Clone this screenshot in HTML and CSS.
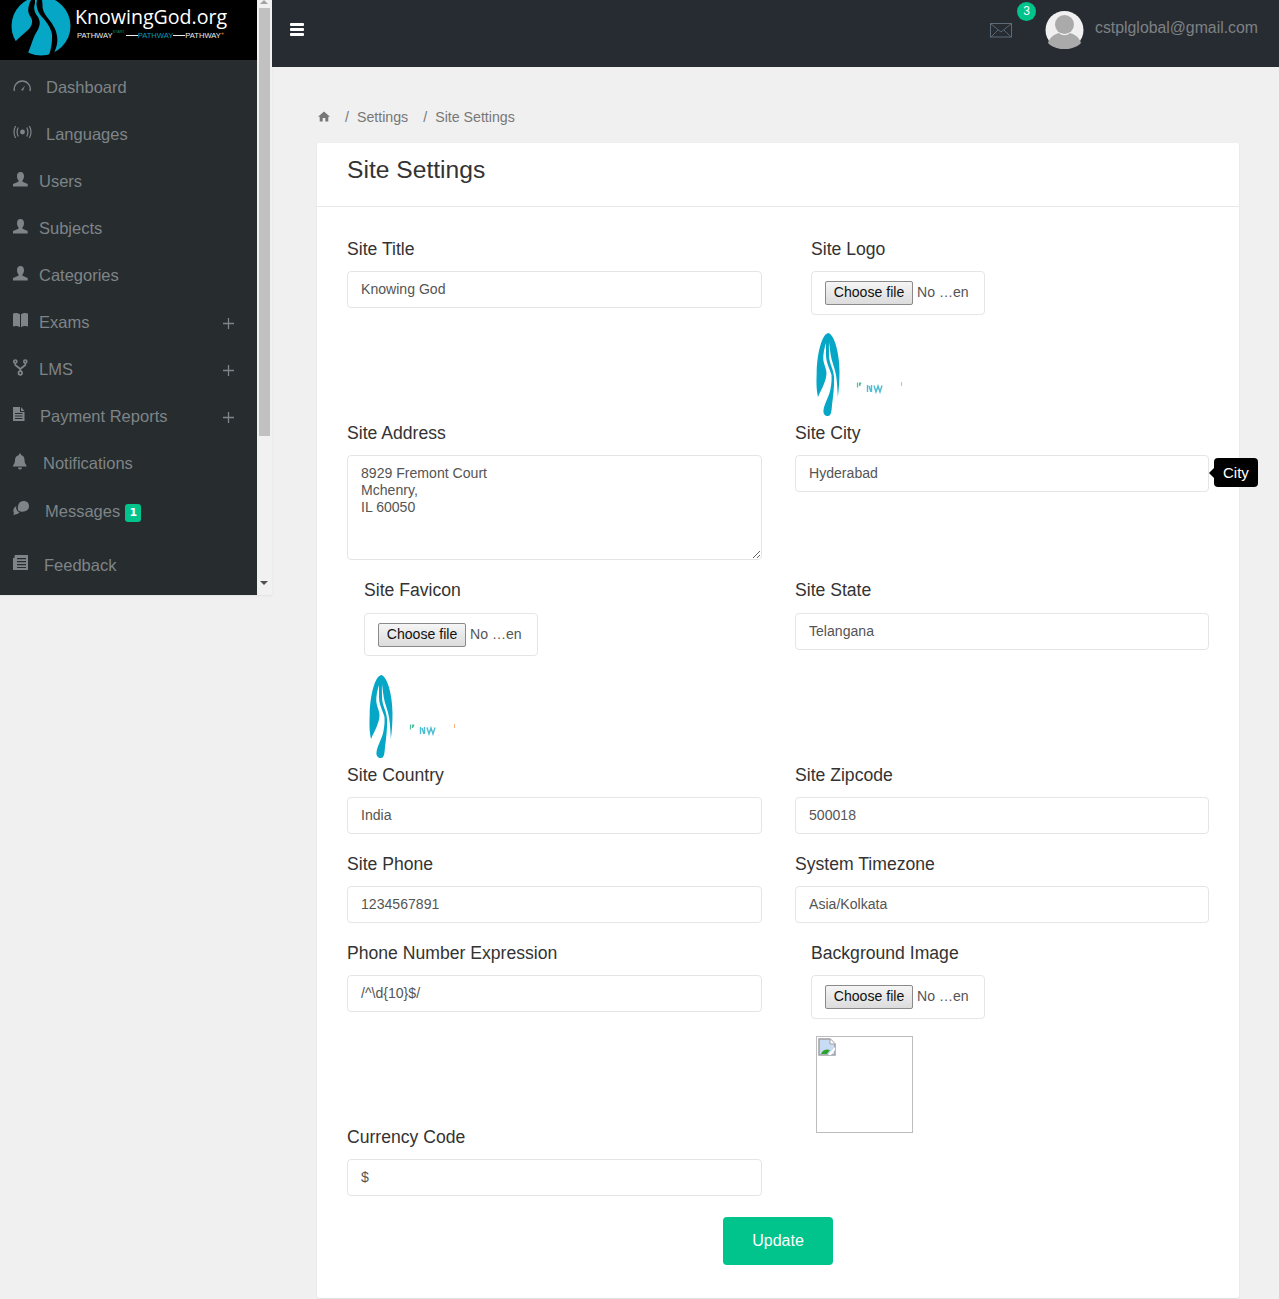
FILE: index.html
```html
<!DOCTYPE html>
<html lang="en">
<head>
<meta charset="utf-8">
<title>Site Settings</title>
<link rel="stylesheet" href="styles.css">
</head>
<body>
<svg class="defs" width="0" height="0" aria-hidden="true">
  <symbol id="squished" viewBox="0 0 97 85">
    <path d="M12.300 0 C19 2 23.500 22 23.500 38 C23.500 48 23 56 21.800 64 C21.500 56 21 48 20 42 C18.500 34 15.500 28 14.700 22 C14 17 13.500 13 13 9 C12.800 14 13 20 13.200 25 C14 32 17.500 36 18 44 C18.500 54 17 64 16 72 C15.500 79 15 83 12 83 C9 83 7 81 7.500 77 C8.500 70 13 64 14.500 56 C16 48 15.500 46 15.500 42 C14 36 10 30 10 22 L10 10 C8 16 7 22 7.300 27 C8 32 10.500 36 10.500 40 C10.500 48 5 57 2 64 C0 55 .5 45 .7 40 C1 20 6 1 12.300 0Z" fill="#06a7c6"/>
    <path d="M41.500 49.500 V54.500 M43.500 49.500 V53 M45 49.500 L43.500 53" stroke="#4fbf9f" stroke-width="1.200" fill="none"/>
    <path d="M51.500 52 V59 M53 53 L55 59 M55.500 52 V59 M58 52.500 L60 59 L62 53 L64 59 L66 52.500" stroke="#4dbdd3" stroke-width="1.400" fill="none"/>
    <rect x="85" y="49" width="1" height="4" fill="#f4b183"/>
  </symbol>
  <symbol id="user" viewBox="0 0 15 18">
    <path d="M7.500 1 C10 1 11 3 11 5.200 C11 7 10.300 8.600 9.400 9.400 L9.600 10.800 L14.700 13 L14.700 15.500 L0 15.500 L0 13 L5.400 10.800 L5.600 9.400 C4.700 8.600 4 7 4 5.200 C4 3 5 1 7.500 1Z" fill="currentColor"/>
  </symbol>
  <symbol id="plus" viewBox="0 0 11 11">
    <path d="M5.500 0 V11 M0 5.500 H11" stroke="currentColor" stroke-width="1.300"/>
  </symbol>
</svg>
<div class="app">
  <aside class="sidebar-wrap">
    <div class="sidebar">
      <div class="brand">
        <svg class="brand-mark" width="60" height="60" viewBox="0 0 60 60">
          <circle cx="30" cy="26" r="29.500" fill="#06a7c6"/>
          <path d="M20 0 C16 8 17 13 19 16 C22 20 22 24 18 29 C14 33 8 37 4 42 L0 60 L17 60 L17 53 C20 46 22 38 25 33 C29 27 30 22 27 17 C24 13 22 9 24 3 L24 0Z" fill="#000"/>
          <path d="M26 0 L25.500 4 C26 10 28 14 32 18 C38 25 42 32 41 38 C41 44 40 49 38 55 L41 60 L42 55 C46 47 47 42 46 36 C45 28 40 22 36 17 C33 13 31 9 31.500 4 L31 0Z" fill="#000"/>
        </svg>
        <div class="brand-text">
          <div class="brand-name">KnowingGod.org</div>
          <div class="brand-sub"><span>PATHWAY</span><sup class="s-start">START</sup><i class="dash"></i><span class="s-blue">PATHWAY</span><i class="dash"></i><span>PATHWAY</span><sup class="s-plus">+</sup></div>
        </div>
      </div>
      <nav class="menu">
        <a class="item">
          <svg class="ico" width="22" height="18" viewBox="0 0 22 18"><path d="M1.500 14 A8 8 0 1 1 17 14" fill="none" stroke="currentColor" stroke-width="1.400"/><path d="M8 13 L12 8.500 L10 13.800Z" fill="currentColor"/></svg>
          <span>Dashboard</span>
        </a>
        <a class="item">
          <svg class="ico" width="22" height="18" viewBox="0 0 22 18"><circle cx="9.500" cy="8" r="2.400" fill="currentColor"/><path d="M5.200 3.500 Q3 8 5.200 12.500 M13.800 3.500 Q16 8 13.800 12.500 M2.600 2 Q-.6 8 2.600 14 M16.400 2 Q19.600 8 16.400 14" fill="none" stroke="currentColor" stroke-width="1.200"/></svg>
          <span>Languages</span>
        </a>
        <a class="item">
          <svg class="ico" width="15" height="18"><use href="#user"/></svg>
          <span>Users</span>
        </a>
        <a class="item">
          <svg class="ico" width="15" height="18"><use href="#user"/></svg>
          <span>Subjects</span>
        </a>
        <a class="item">
          <svg class="ico" width="15" height="18"><use href="#user"/></svg>
          <span>Categories</span>
        </a>
        <a class="item">
          <svg class="ico" width="15" height="18" viewBox="0 0 15 18"><path d="M0 1.500 C2.500 .5 5 1 7 2.300 L7 15.300 C5 14 2.500 13.500 0 14.500Z M8 2.300 C10 1 12.500 .5 15 1.500 L15 14.500 C12.500 13.500 10 14 8 15.300Z" fill="currentColor"/></svg>
          <span>Exams</span>
          <svg class="plus" width="11" height="11"><use href="#plus"/></svg>
        </a>
        <a class="item">
          <svg class="ico" width="15" height="18" viewBox="0 0 15 18"><g fill="none" stroke="currentColor" stroke-width="1.700"><circle cx="2.300" cy="2.500" r="1.500"/><circle cx="12.300" cy="2.500" r="1.500"/><circle cx="7.300" cy="14" r="1.800"/><path d="M2.300 4 V6 L7.300 10 V12.200 M12.300 4 V6 L7.300 10"/></g></svg>
          <span>LMS</span>
          <svg class="plus" width="11" height="11"><use href="#plus"/></svg>
        </a>
        <a class="item">
          <svg class="ico" width="16" height="18" viewBox="0 0 16 18"><path fill-rule="evenodd" d="M0 1 H7 V6 H11.500 V15 H0Z M8 1 L11.500 5 H8Z M2 7 V8 H9.500 V7Z M2 9.500 V10.500 H9.500 V9.500Z M2 12 V13 H9.500 V12Z" fill="currentColor"/></svg>
          <span>Payment Reports</span>
          <svg class="plus" width="11" height="11"><use href="#plus"/></svg>
        </a>
        <a class="item">
          <svg class="ico" width="19" height="18" viewBox="0 0 19 18"><path d="M7 .5 C7.800 .5 8 1 8 2 C10.500 2.500 11.500 4.500 11.500 7 C11.500 10 12.500 11 13.500 12.500 V13.500 H0 V12.500 C1 11 2 10 2 7 C2 4.500 3.500 2.500 6 2 C6 1 6.200 .5 7 .5Z M5 14.500 H9 C8.800 16 7.900 16.500 7 16.500 C6.100 16.500 5.200 16 5 14.500Z" fill="currentColor"/></svg>
          <span>Notifications</span>
        </a>
        <a class="item item-msg">
          <svg class="ico" width="21" height="18" viewBox="0 0 21 18"><path d="M10.500 0 C14.500 0 16 2.500 16 5 C16 8.500 13.500 10.500 10.500 10.500 C8 11 6 10.500 5 9 C4.500 7 4.800 0 10.500 0Z" fill="currentColor"/><path d="M3.500 5 C2.500 7 3.500 10 6.500 11.500 C5.500 12.800 3.500 13.200 0 14 C1 13 1 12.500 .8 11.500 C-.3 9.500 .6 6.500 3.500 5Z" fill="currentColor"/></svg>
          <span>Messages</span>
          <b class="badge">1</b>
        </a>
        <a class="item item-feed">
          <svg class="ico" width="20" height="18" viewBox="0 0 20 18"><path fill-rule="evenodd" d="M2 0 H15 V15 H0 V3 H1.500 V1Z M4 3 V4.300 H13 V3Z M4 6 V7.300 H13 V6Z M4 9 V10.300 H13 V9Z M4 12 V13 H13 V12Z" fill="currentColor"/></svg>
          <span>Feedback</span>
        </a>
      </nav>
    </div>
    <div class="scrollbar">
      <div class="arrow arrow-up"></div>
      <div class="thumb"></div>
      <div class="track-rest"></div>
      <div class="arrow arrow-down"></div>
    </div>
  </aside>

  <div class="main">
    <header class="topbar">
      <div class="burger"><i></i><i></i><i></i></div>
      <div class="top-right">
        <div class="mail">
          <svg width="22" height="15" viewBox="0 0 22 15"><rect x=".5" y=".5" width="21" height="13.500" fill="none" stroke="#5b6b78"/><path d="M1 1 L11 9 L21 1 M1 14 L8 7 M21 14 L14 7" fill="none" stroke="#5b6b78" stroke-width=".9"/></svg>
          <span class="mail-badge">3</span>
        </div>
        <svg class="avatar" width="39" height="38" viewBox="0 0 39 38"><circle cx="19.500" cy="19" r="19" fill="#f0f0f0"/><circle cx="19.500" cy="13.500" r="9.500" fill="#aaa"/><path d="M3 32 C5 25 11 23 14 22 C17 25 22 25 25 22 C28 23 34 25 36 32 C32 36 26 38 19.500 38 C13 38 7 36 3 32Z" fill="#aaa"/></svg>
        <span class="email">cstplglobal@gmail.com</span>
      </div>
    </header>

    <div class="content">
      <ol class="crumbs">
        <li class="crumb-home"><svg width="12" height="11" viewBox="0 0 12 11"><path d="M6 .5 L12 5.800 H10.300 V10.500 H7.300 V7 H4.700 V10.500 H1.700 V5.800 H0Z" fill="#777"/></svg></li>
        <li class="sep">/</li>
        <li>Settings</li>
        <li class="sep">/</li>
        <li>Site Settings</li>
      </ol>

      <section class="card">
        <h1 class="card-title">Site Settings</h1>
        <form class="card-body">
          <div class="fields">
            <div class="field">
              <label>Site Title</label>
              <input class="control" type="text" value="Knowing God">
            </div>
            <div class="field file-field">
              <label>Site Logo</label>
              <div class="file"><span class="file-btn">Choose file</span><span class="file-name">No …en</span></div>
              <svg class="thumb-logo" width="97" height="85"><use href="#squished"/></svg>
            </div>

            <div class="field">
              <label>Site Address</label>
              <textarea class="control area">8929 Fremont Court
Mchenry,
IL 60050</textarea>
            </div>
            <div class="field tip-anchor">
              <label>Site City</label>
              <input class="control" type="text" value="Hyderabad">
              <div class="tooltip">City</div>
            </div>

            <div class="field file-field favicon-field low">
              <label>Site Favicon</label>
              <div class="file file-short"><span class="file-btn">Choose file</span><span class="file-name">No …en</span></div>
              <svg class="thumb-logo" width="97" height="85"><use href="#squished"/></svg>
            </div>
            <div class="field low">
              <label>Site State</label>
              <input class="control" type="text" value="Telangana">
            </div>

            <div class="field">
              <label>Site Country</label>
              <input class="control" type="text" value="India">
            </div>
            <div class="field">
              <label>Site Zipcode</label>
              <input class="control" type="text" value="500018">
            </div>

            <div class="field">
              <label>Site Phone</label>
              <input class="control" type="text" value="1234567891">
            </div>
            <div class="field">
              <label>System Timezone</label>
              <input class="control" type="text" value="Asia/Kolkata">
            </div>

            <div class="field">
              <label>Phone Number Expression</label>
              <input class="control" type="text" value="/^\d{10}$/">
            </div>
            <div class="field file-field bg-field">
              <label>Background Image</label>
              <div class="file"><span class="file-btn">Choose file</span><span class="file-name">No …en</span></div>
              <div class="broken">
                <svg width="18" height="18" viewBox="0 0 18 18"><path d="M1 1 H12 L17 6 V17 H1Z" fill="#c9dcf5" stroke="#a0a0a0" stroke-width="1.500"/><path d="M12 1 V6 H17" fill="#fff" stroke="#a0a0a0"/><path d="M3 16 C5 11 9 11 12 12 L9 16Z" fill="#2da32d"/><path d="M10 17 L17 9 V12 L13 17Z" fill="#fff"/></svg>
              </div>
            </div>

            <div class="field">
              <label>Currency Code</label>
              <input class="control" type="text" value="$">
            </div>
          </div>
          <div class="actions"><button class="update" type="button">Update</button></div>
        </form>
      </section>
    </div>
  </div>
</div>
</body>
</html>
```
FILE: styles.css
```css
* { box-sizing: border-box; }
html, body { margin: 0; padding: 0; height: 1299px; overflow: hidden; }
body { background: #f0f0f0; font-family: "Liberation Sans", Arial, sans-serif; color: #333; }
.defs { position: absolute; }
.app { display: flex; align-items: flex-start; }

/* sidebar */
.sidebar-wrap { flex: 0 0 272px; height: 595px; display: flex; background: #f1f1f1; box-shadow: 0 1px 2px rgba(0,0,0,.06); }
.sidebar { width: 257px; background: #272c2f; }
.brand { height: 60px; background: #000; display: flex; overflow: hidden; padding-left: 11px; }
.brand-mark { flex: none; }
.brand-text { margin-left: 4px; }
.brand-name { font-family: "Open Sans", sans-serif; font-size: 19.600px; line-height: 26px; margin-top: 4px; color: #fff; white-space: nowrap; }
.brand-sub { display: flex; align-items: center; font-size: 7.600px; line-height: 9px; color: #eee; margin: 1px 0 0 2px; white-space: nowrap; }
.s-start { font-size: 3.800px; color: #0c8a63; line-height: 4px; align-self: flex-start; margin: -1px 1px 0 0; }
.s-blue { color: #0b9ab5; }
.s-plus { font-size: 6px; color: #e67e22; line-height: 4px; align-self: flex-start; }
.dash { display: inline-block; width: 12px; height: 1px; background: #eee; }
.menu { padding-top: 4px; }
.item { position: relative; height: 47px; display: flex; align-items: center; padding-left: 13px; font-size: 16.500px; color: #7e8487; }
.ico { flex: none; margin: -4px 11px 0 0; }
.plus { position: absolute; left: 223px; top: 19px; }
.item-msg { padding-top: 2px; }
.item-feed { margin-top: 8px; }
.badge { margin-left: 5px; margin-top: 2px; width: 16px; height: 18px; border-radius: 3px; background: #00c48c; color: #fff; font: bold 11px/18px "DejaVu Sans", sans-serif; text-align: center; }
.scrollbar { width: 15px; display: flex; flex-direction: column; background: #f1f1f1; }
.arrow { height: 8px; flex: none; position: relative; }
.arrow::after { content: ""; position: absolute; left: 3px; border-left: 4px solid transparent; border-right: 4px solid transparent; }
.arrow-up::after { top: 0; border-bottom: 4px solid #a3a3a3; }
.arrow-down { height: 17px; }
.arrow-down::after { top: 3px; border-top: 4px solid #505050; }
.thumb { height: 428px; margin: 0 2px; background: #c1c1c1; flex: none; width: 11px; }
.track-rest { flex: 1; }

/* top bar */
.main { flex: 1; min-width: 0; }
.topbar { height: 67px; background: #272c33; display: flex; align-items: flex-start; justify-content: space-between; padding-right: 21px; }
.burger { margin: 23px 0 0 18px; width: 14px; display: flex; flex-direction: column; gap: 2px; }
.burger i { display: block; height: 3px; background: #fff; border-radius: 1px; }
.top-right { display: flex; align-items: flex-start; }
.mail { position: relative; margin-top: 23px; width: 22px; height: 15px; }
.mail svg { display: block; }
.mail-badge { position: absolute; left: 27px; top: -21px; width: 19px; height: 19px; border-radius: 50%; background: #00c48c; color: #fff; font-size: 12px; line-height: 19px; text-align: center; }
.avatar { margin: 11px 0 0 33px; flex: none; }
.email { margin: 19px 0 0 11px; font-size: 15.840px; line-height: 18px; color: #7e8184; }

/* content */
.content { padding: 0 40px 0 45px; }
.crumbs { list-style: none; margin: 0; padding: 33px 0 0; height: 76px; display: flex; align-items: flex-start; font-size: 14.200px; line-height: 34px; color: #777; }
.crumb-home { width: 12px; margin-left: 1px; }
.crumb-home svg { display: block; margin-top: 11px; }
.sep { margin: 0 8px 0 15px; }
.card { background: #fff; border-radius: 2px; box-shadow: 0 1px 2px rgba(0,0,0,.08); height: 1155px; }
.card-title { margin: 0; height: 64px; padding: 12px 30px 0; border-bottom: 1px solid #e8e8e8; font-size: 24.640px; line-height: 30px; font-weight: 400; color: #333; }
.card-body { padding: 32px 30px 0; }
.fields { display: grid; grid-template-columns: 415px 414px; column-gap: 33px; grid-template-rows: 184px 157px 185px 89px 89px 184px 69px; }
.field { position: relative; min-width: 0; }
.field label { display: block; font-size: 17.600px; line-height: 20px; margin-bottom: 12px; color: #333; }
.field.low label { margin-bottom: 13px; }
.control { display: block; width: 100%; height: 37px; padding: 0 13px 2px; border: 1px solid #e5e5e5; border-radius: 4px; background: #fff; font: 14.080px "Liberation Sans", Arial, sans-serif; color: #555; outline: 0; }
.area { height: 105px; padding: 9px 13px; line-height: 17px; }
.file-field { padding-left: 16px; }
.favicon-field { padding-left: 17px; }
.bg-field { grid-row: span 2; }
.file { display: flex; align-items: center; gap: 4px; width: 174px; height: 44px; padding-left: 13px; border: 1px solid #e5e5e5; border-radius: 4px; background: #fff; font-size: 14.080px; color: #555; white-space: nowrap; }
.file-short { height: 43px; }
.file-btn { width: 88px; height: 24px; line-height: 20px; text-align: center; border: 1px solid #8a8a8a; border-radius: 2px; background: linear-gradient(#f5f5f5, #dcdcdc); color: #111; }
.file-name { margin-bottom: 2px; }
.thumb-logo { display: block; margin: 19px 0 0 5px; }
.field:not(.favicon-field) > .thumb-logo { margin-top: 18px; }
.broken { width: 97px; height: 97px; margin: 17px 0 0 5px; padding: 1px; border: 1px solid #bdbdbd; background: #fff; }
.broken svg { display: block; }
.tooltip { position: absolute; top: 35px; left: calc(100% + 5px); padding: 0 9px; height: 29px; line-height: 29px; border-radius: 4px; background: #000; color: #fff; font-size: 15px; white-space: nowrap; }
.tooltip::before { content: ""; position: absolute; left: -5px; top: 10px; border-top: 5px solid transparent; border-bottom: 5px solid transparent; border-right: 5px solid #000; }
.actions { display: flex; justify-content: center; margin-top: 21px; }
.update { width: 110px; height: 48px; border: 0; border-radius: 4px; background: #00c48c; color: #fff; font: 16px "Liberation Sans", Arial, sans-serif; }
```
